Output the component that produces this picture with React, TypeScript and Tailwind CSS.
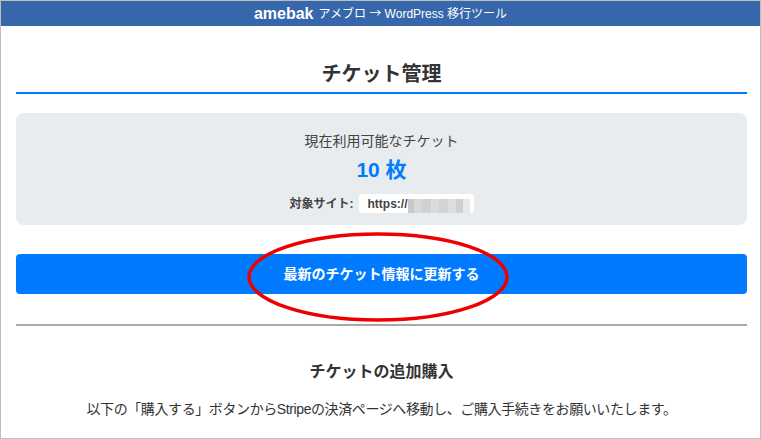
import React from 'react';

const jp = { fontFamily: '"Liberation Sans", "Noto Sans CJK JP", sans-serif' };

export default function App() {
  return (
    <div className="relative w-[761px] h-[439px] overflow-hidden bg-white border border-[#bdbdbd] text-[#333]" style={jp}>
      {/* Header */}
      <div className="h-[25px] bg-[#3567aa] flex items-center justify-center gap-[5px] text-white">
        <span className="text-[16px] font-bold leading-none">amebak</span>
        <span className="text-[12px] leading-none">
          アメブロ <span className="font-['Noto_Sans_CJK_JP']">→</span> WordPress 移行ツール
        </span>
      </div>

      <main className="pl-[15px] pr-[13px]">
        <h2 className="mt-[34px] pb-[4px] text-center text-[20px] leading-[28px] font-bold text-[#333] border-b-2 border-[#007bff]">
          チケット管理
        </h2>

        <div className="mt-[19px] h-[112px] rounded-[8px] bg-[#e9ecef] pt-[18px] flex flex-col items-center">
          <div className="text-[14px] leading-[20px] text-[#444]">現在利用可能なチケット</div>
          <div className="mt-[5px] text-[21px] leading-[28px] font-bold text-[#007bff]">10 枚</div>
          <div className="mt-[10px] flex items-center gap-[5px] text-[12px] font-bold text-[#444]">
            <span>対象サイト:</span>
            <span className="flex items-center h-[19px] rounded-[3px] bg-white pl-[9px] pr-[4px]">
              <span>https://</span>
              <span className="flex h-[14px] mt-[4px]">
                <span className="w-[6px] bg-[#c9c9c9]" />
                <span className="w-[8px] bg-[#d8d8d8]" />
                <span className="w-[9px] bg-[#cfd1d1]" />
                <span className="w-[8px] bg-[#dcdcdc]" />
                <span className="w-[9px] bg-[#d4d2d2]" />
                <span className="w-[8px] bg-[#dedede]" />
                <span className="w-[7px] bg-[#cfcfcf]" />
                <span className="w-[7px] bg-[#e8e8e8]" />
              </span>
            </span>
          </div>
        </div>

        <button className="mt-[29px] w-full h-[40px] rounded-[4px] bg-[#007bff] text-white text-[14px] font-bold">
          最新のチケット情報に更新する
        </button>

        <hr className="mt-[30px] border-0 h-[2px] bg-[#a9a9a9]" />

        <h3 className="mt-[34px] text-center text-[16px] leading-[24px] font-bold text-[#333]">チケットの追加購入</h3>
        <p className="mt-[15px] text-center text-[14px] leading-[20px] tracking-[-0.4px] text-[#333]">
          以下の「購入する」ボタンからStripeの決済ページへ移動し、ご購入手続きをお願いいたします。
        </p>
      </main>

      {/* red highlight ellipse */}
      <svg className="absolute left-[244px] top-[230px] pointer-events-none" width="268" height="94" viewBox="0 0 268 94">
        <ellipse cx="133" cy="46" rx="129" ry="43" fill="none" stroke="#ee0000" strokeWidth="3.5" />
      </svg>
    </div>
  );
}
